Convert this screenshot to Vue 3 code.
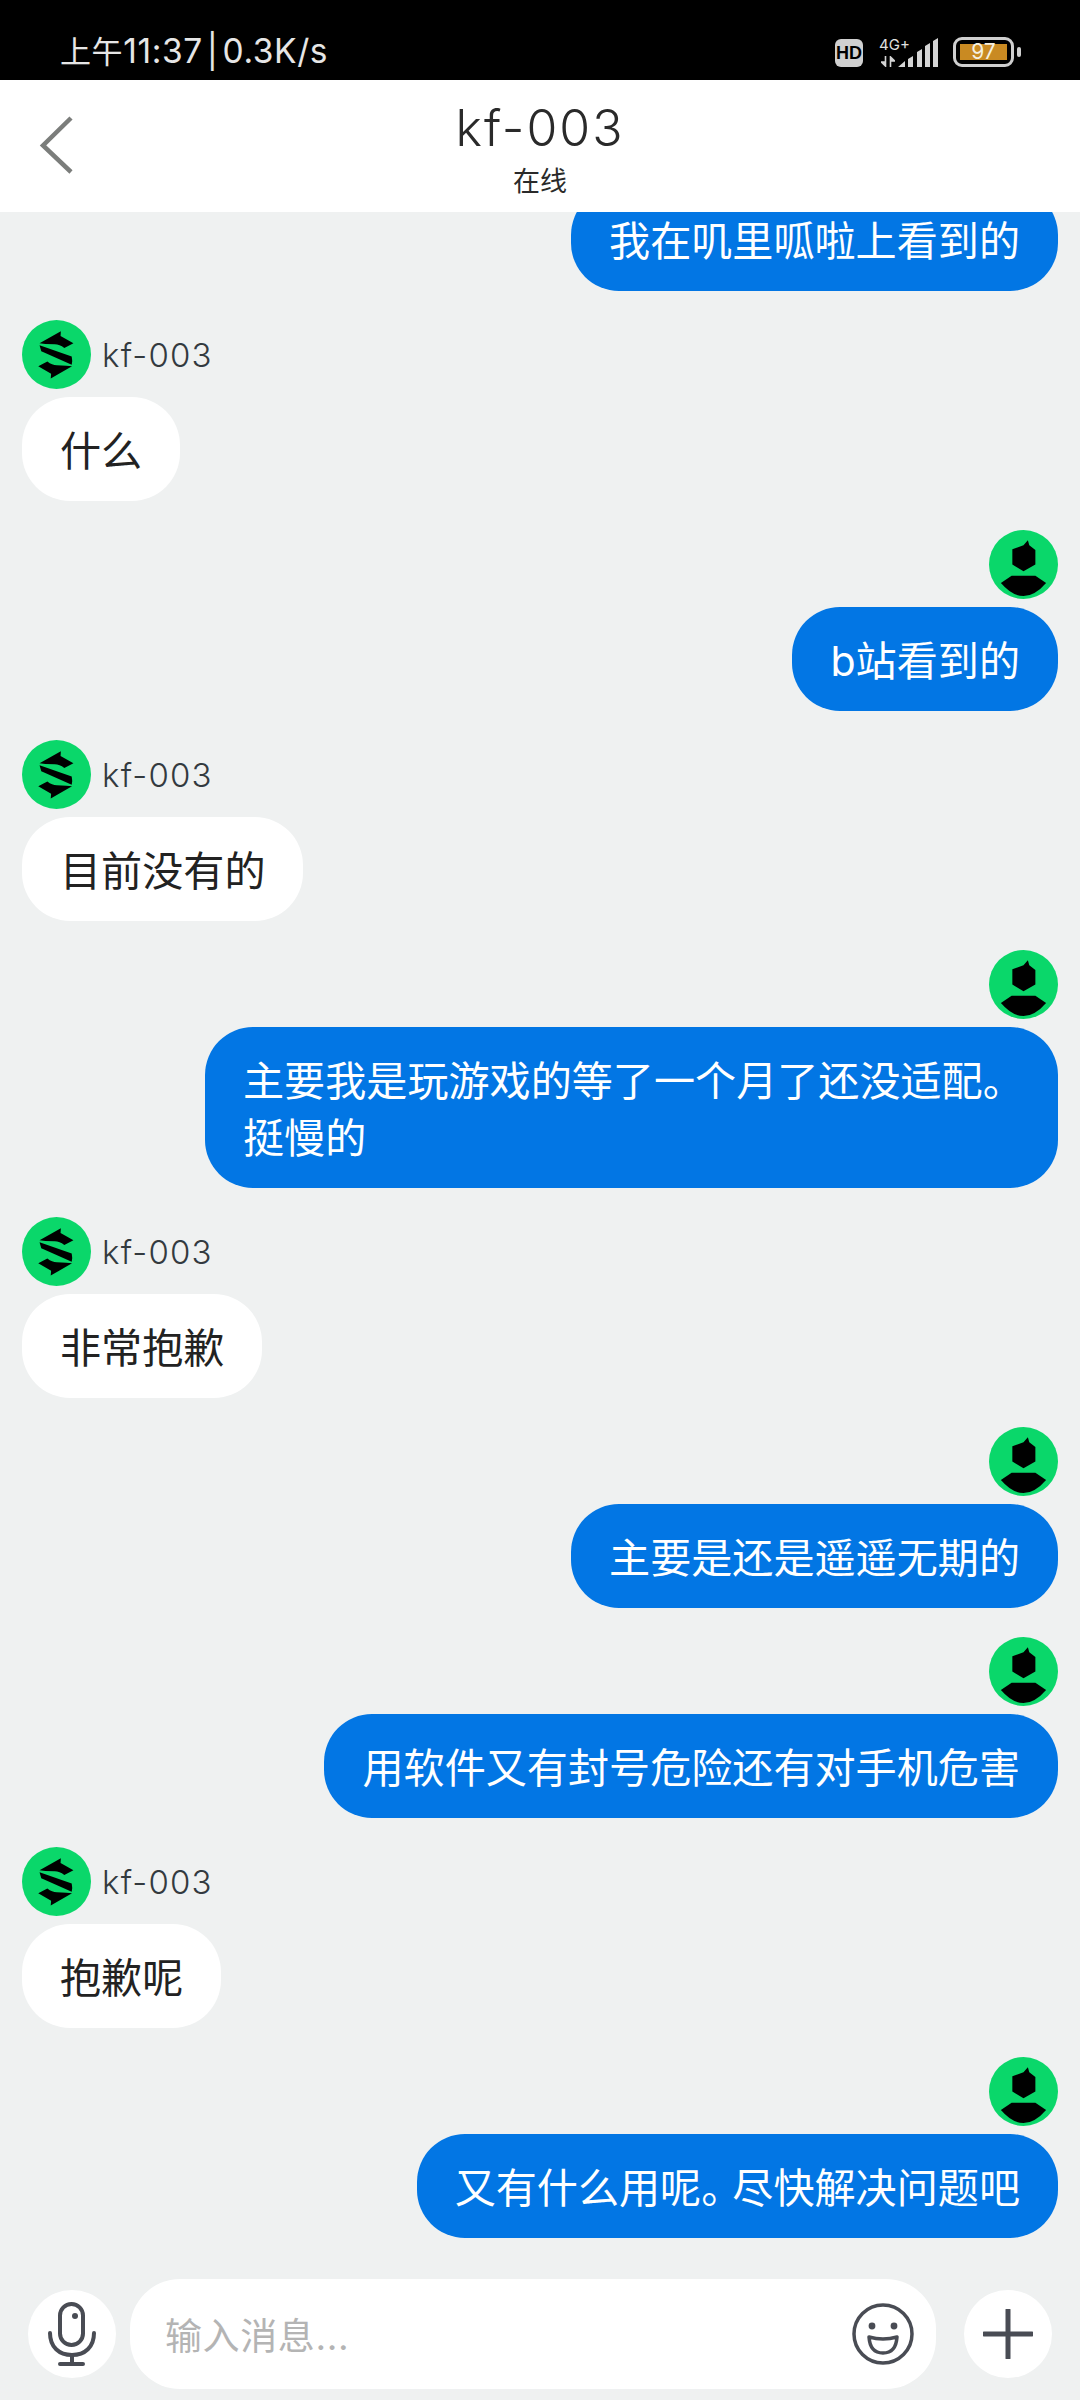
<script setup>
const messages = [
  { me: true, text: '我在叽里呱啦上看到的', first: true },
  { me: false, name: 'kf-003', text: '什么' },
  { me: true, text: 'b站看到的' },
  { me: false, name: 'kf-003', text: '目前没有的' },
  { me: true, text: '主要我是玩游戏的等了一个月了还没适配。挺慢的' },
  { me: false, name: 'kf-003', text: '非常抱歉' },
  { me: true, text: '主要是还是遥遥无期的' },
  { me: true, text: '用软件又有封号危险还有对手机危害' },
  { me: false, name: 'kf-003', text: '抱歉呢' },
  { me: true, text: '又有什么用呢。尽快解决问题吧' }
]

// the full stop is set tighter than the default CJK advance
function parts(text) {
  return text.split(/(。)/).filter(Boolean)
}
</script>

<template>
  <div class="phone">
    <div class="status">
      <span class="clock"><span class="clock-cjk">上午</span>11:37 | 0.3K/s</span>
      <div class="status-right">
        <span class="hd">HD</span>
        <div class="net">
          <span class="net-type">4G+</span>
          <svg class="arrows" width="14" height="11" viewBox="0 0 14 11">
            <path d="M4.5 0V10L0.5 6H4.5" fill="#d4d4d4" stroke="#d4d4d4" stroke-width="1.6" />
            <path d="M9.5 11V1L13.5 5H9.5" fill="#d4d4d4" stroke="#d4d4d4" stroke-width="1.6" />
          </svg>
        </div>
        <svg class="signal" width="40" height="29" viewBox="0 0 40 29">
          <path d="M0 29 L7 23 V29 Z M10 29 V21 L15 18 V29 Z M19 29 V14 L24 11 V29 Z M27 29 V8 L32 5 V29 Z M35 29 V3 L40 0 V29 Z" fill="#d4d4d4" />
        </svg>
        <div class="battery">
          <div class="battery-body"><span>97</span></div>
          <i class="battery-nub"></i>
        </div>
      </div>
    </div>

    <header class="top">
      <svg class="back" width="36" height="60" viewBox="0 0 36 60">
        <path d="M33 2 L5 29.5 L33 56" fill="none" stroke="#7b7d7b" stroke-width="4.5" />
      </svg>
      <div class="title">kf-003</div>
      <div class="subtitle">在线</div>
    </header>

    <main class="chat">
      <div class="list">
        <div v-for="(m, i) in messages" :key="i" class="msg" :class="{ me: m.me }">
          <div v-if="!m.first" class="who">
            <svg v-if="!m.me" class="avatar" viewBox="1 1 68 68">
              <circle cx="35" cy="35" r="34" fill="#0ad76a" />
              <path d="M18.3 24 L39.3 12 L39 16.7 L51.7 24 L42.7 28.7 Q38 25 33.3 25 L24 24.7 Z" fill="#000" />
              <path d="M18.3 26 L50 37 Q51 42 50 45 L20 31.7 Z" fill="#000" />
              <path d="M50.3 46.7 L29.3 58.7 L29.7 54 L17 46.7 L26 42 Q30.7 45.7 35.3 45.7 L44.7 46 Z" fill="#000" />
            </svg>
            <svg v-else class="avatar" viewBox="1 1 68 68">
              <circle cx="35" cy="35" r="34" fill="#0ad76a" />
              <path d="M24 20 L35 16 L39.3 11 L40.7 16 L46.7 20.7 V35 L35 41.7 L24 35 Z" fill="#000" />
              <path d="M23.3 46 H46.7 L57.3 53.3 Q35 79 12.7 53.3 Z" fill="#000" />
            </svg>
            <span v-if="!m.me" class="name">{{ m.name }}</span>
          </div>
          <div class="bubble"><template v-for="(p, j) in parts(m.text)" :key="j"><span v-if="p === '。'" class="stop">{{ p }}</span><template v-else>{{ p }}</template></template></div>
        </div>
      </div>
    </main>

    <footer class="composer">
      <div class="round">
        <svg width="50" height="64" viewBox="0 0 50 64">
          <rect x="13" y="2" width="23" height="41" rx="11.5" fill="none" stroke="#494c54" stroke-width="4" />
          <circle cx="28" cy="14" r="3" fill="#494c54" />
          <path d="M3 31 C3 45 12 53 25 53 C38 53 47 45 47 31" fill="none" stroke="#494c54" stroke-width="4" stroke-linecap="round" />
          <path d="M25 53 V61 M13 62 H36" fill="none" stroke="#494c54" stroke-width="4" stroke-linecap="round" />
        </svg>
      </div>
      <div class="input">
        <span class="placeholder">输入消息...</span>
        <svg class="smile" width="62" height="62" viewBox="0 0 62 62">
          <circle cx="31" cy="31" r="29" fill="none" stroke="#494c54" stroke-width="3.5" />
          <circle cx="20" cy="23" r="3.4" fill="#494c54" />
          <circle cx="42" cy="23" r="3.4" fill="#494c54" />
          <path d="M17 34 Q31 38 45 34 Q44 50 31 50 Q18 50 17 34 Z" fill="none" stroke="#494c54" stroke-width="3.5" stroke-linejoin="round" />
        </svg>
      </div>
      <div class="round plus">
        <svg width="50" height="50" viewBox="0 0 50 50">
          <path d="M25 1 V49 M1 25 H49" fill="none" stroke="#494c54" stroke-width="5" stroke-linecap="round" />
        </svg>
      </div>
    </footer>
  </div>
</template>

<style>
body {
  background: #eff1f1;
}
</style>

<style scoped>
.phone {
  width: 1080px;
  height: 2400px;
  display: flex;
  flex-direction: column;
  background: #eff1f1;
  font-family: "Inter", "Noto Sans CJK SC", sans-serif;
  overflow: hidden;
}

.status {
  height: 80px;
  flex: none;
  background: #000;
  display: flex;
  align-items: flex-end;
  justify-content: space-between;
  padding: 0 60px 6px 60px;
  box-sizing: border-box;
}

.clock {
  color: #e6e6e6;
  font-size: 33.5px;
  line-height: 44px;
  letter-spacing: 0.6px;
  word-spacing: -6px;
}

.clock-cjk {
  font-size: 31px;
}

.status-right {
  display: flex;
  align-items: flex-end;
  height: 32px;
  margin-bottom: 7px;
  margin-right: 1px;
}

.hd {
  width: 28px;
  height: 28px;
  border-radius: 6px;
  background: #d0d0d0;
  color: #000;
  font: bold 18px/28px "Liberation Sans", sans-serif;
  text-align: center;
  margin-right: 16px;
}

.net {
  width: 30px;
  height: 30px;
  display: flex;
  flex-direction: column;
  margin-right: -11px;
}

.net-type {
  color: #e0e0e0;
  font: 15px/15px "Inter", sans-serif;
}

.arrows {
  margin-top: 4px;
  margin-left: 2px;
}

.signal {
  display: block;
  margin-right: 15px;
}

.battery {
  display: flex;
  align-items: center;
  gap: 3px;
  margin-right: -2px;
}

.battery-body {
  width: 61px;
  height: 30px;
  box-sizing: border-box;
  border: 3px solid #cfcfcf;
  border-radius: 9px;
  padding: 4px;
  display: flex;
}

.battery-body span {
  flex: 1;
  background: #c98a22;
  color: #f5f0e0;
  font: 21px/16px "Inter", sans-serif;
  text-align: center;
}

.battery-nub {
  width: 4px;
  height: 10px;
  border-radius: 2px;
  background: #cfcfcf;
  display: block;
}

.top {
  height: 132px;
  flex: none;
  background: #fff;
  position: relative;
  text-align: center;
  color: #2a2a2a;
}

.back {
  position: absolute;
  left: 38px;
  top: 36px;
}

.title {
  font-size: 50px;
  line-height: 60px;
  padding-top: 18px;
  font-weight: 300;
  letter-spacing: 2px;
}

.subtitle {
  font-size: 27px;
  line-height: 34px;
  margin-top: 7px;
}

.chat {
  flex: 1;
  min-height: 0;
  overflow: hidden;
}

.list {
  margin-top: -25px;
  padding: 0 22px;
  display: flex;
  flex-direction: column;
  gap: 29px;
}

.msg {
  display: flex;
  flex-direction: column;
  align-items: flex-start;
  gap: 8px;
}

.msg.me {
  align-items: flex-end;
}

.who {
  display: flex;
  align-items: center;
  gap: 11px;
}

.avatar {
  width: 69px;
  height: 69px;
  display: block;
}

.name {
  font-size: 33px;
  line-height: 40px;
  color: #333a3f;
  font-weight: 300;
  letter-spacing: 1.2px;
}

.bubble {
  background: #fff;
  color: #222;
  font-size: 41.1px;
  line-height: 57px;
  padding: 26px 38px 21px;
  border-radius: 48px;
  max-width: 853px;
  box-sizing: border-box;
}

.stop {
  letter-spacing: -10px;
}

.me .bubble {
  background: #0276e4;
  color: #fff;
}

.composer {
  flex: none;
  height: 121px;
  padding: 0 28px 11px;
  box-sizing: border-box;
  display: flex;
  align-items: center;
  gap: 14px;
}

.round {
  width: 88px;
  height: 88px;
  flex: none;
  border-radius: 50%;
  background: #fff;
  display: flex;
  align-items: center;
  justify-content: center;
}

.round.plus {
  margin-left: 14px;
}

.input {
  flex: 1;
  height: 110px;
  border-radius: 50px;
  background: #fff;
  display: flex;
  align-items: center;
  justify-content: space-between;
  padding: 0 22px 0 35px;
}

.placeholder {
  font-size: 37px;
  color: #b4b4b4;
  letter-spacing: 0.6px;
}

.smile {
  display: block;
}
</style>
